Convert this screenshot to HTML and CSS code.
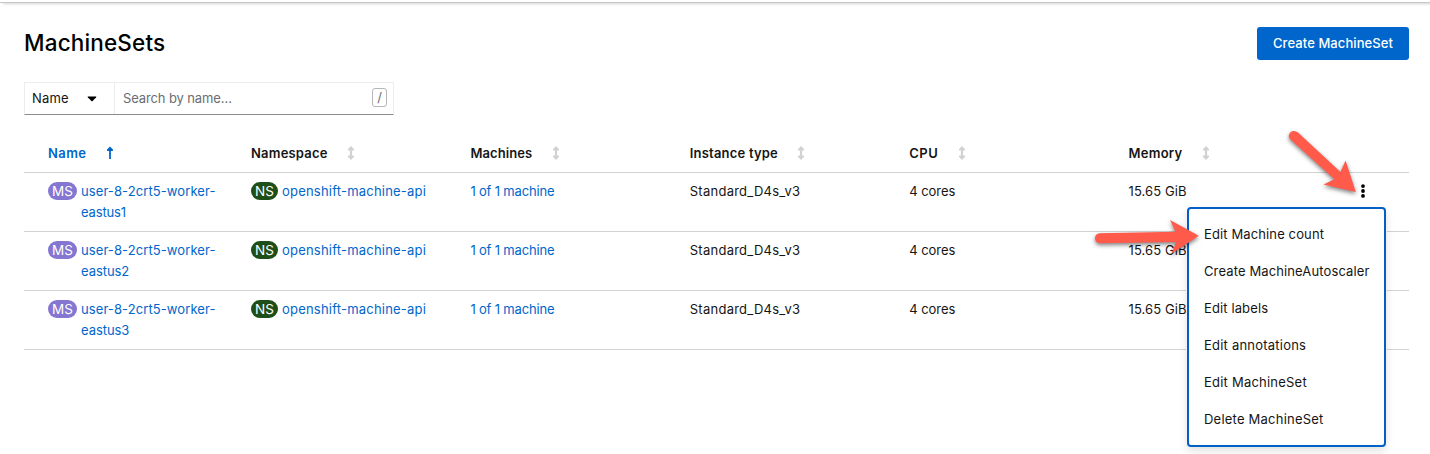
FILE: index.html
```
<!DOCTYPE html>
<html lang="en">
<head>
<meta charset="utf-8">
<title>MachineSets</title>
<link rel="stylesheet" href="styles.css">
</head>
<body>
<svg class="defs" width="0" height="0">
  <symbol id="sort" viewBox="0 0 8 14"><path d="M4 0 7.200 3.300 6.700 4.500H5.100V9.500H6.700L7.200 10.700 4 14 .8 10.700 1.300 9.500H2.900V4.500H1.300L.8 3.300Z"/></symbol>
  <symbol id="up" viewBox="0 0 8 14"><path d="M4 .4 7.200 3.700 6.700 4.900H4.900V13.100H3.100V4.900H1.300L.8 3.700Z"/></symbol>
</svg>
<div class="masthead-edge"></div>
<main class="page">
  <header class="title-row">
    <h1 class="title">MachineSets</h1>
    <button class="create">Create MachineSet</button>
  </header>
  <div class="filter">
    <div class="filter-select"><span>Name</span><svg width="10" height="6" viewBox="0 0 10 6"><path d="M1.2.5H8.8Q9.7.5 9.2 1.2L5.6 5Q5 5.6 4.4 5L.8 1.2Q.3.5 1.2.5Z"/></svg></div>
    <div class="filter-input"><span class="placeholder">Search by name…</span><span class="key">/</span></div>
  </div>
  <section class="table">
    <div class="row head">
      <div class="th sorted w-name">Name<svg class="sort"><use href="#up"/></svg></div>
      <div class="th w-namespace">Namespace<svg class="sort"><use href="#sort"/></svg></div>
      <div class="th w-machines">Machines<svg class="sort"><use href="#sort"/></svg></div>
      <div class="th w-instance">Instance type<svg class="sort"><use href="#sort"/></svg></div>
      <div class="th w-cpu">CPU<svg class="sort"><use href="#sort"/></svg></div>
      <div class="th w-memory">Memory<svg class="sort"><use href="#sort"/></svg></div>
    </div>
    <div class="row">
      <div class="resource"><span class="badge ms">MS</span><a class="link set">user-8-2crt5-worker-<br><span class="one">eastus1</span></a></div>
      <div class="resource"><span class="badge ns">NS</span><a class="link project">openshift-machine-api</a></div>
      <div><a class="link count">1 of 1 machine</a></div>
      <div class="instance">Standard_D4s_v3</div>
      <div class="cores">4 cores</div>
      <div>15.65 GiB</div>
      <div class="actions">
        <svg width="6" height="14" viewBox="0 0 6 14"><circle cx="3" cy="2.1" r="1.9"/><circle cx="3" cy="7" r="1.9"/><circle cx="3" cy="11.9" r="1.9"/></svg>
        <div class="menu">
          <a class="m-count">Edit Machine count</a>
          <a class="m-scaler">Create MachineAutoscaler</a>
          <a class="m-labels">Edit labels</a>
          <a class="m-notes">Edit annotations</a>
          <a class="m-edit">Edit MachineSet</a>
          <a class="m-delete">Delete MachineSet</a>
        </div>
      </div>
    </div>
    <div class="row">
      <div class="resource"><span class="badge ms">MS</span><a class="link set">user-8-2crt5-worker-<br><span class="other">eastus2</span></a></div>
      <div class="resource"><span class="badge ns">NS</span><a class="link project">openshift-machine-api</a></div>
      <div><a class="link count">1 of 1 machine</a></div>
      <div class="instance">Standard_D4s_v3</div>
      <div class="cores">4 cores</div>
      <div>15.65 GiB</div>
    </div>
    <div class="row">
      <div class="resource"><span class="badge ms">MS</span><a class="link set">user-8-2crt5-worker-<br><span class="other">eastus3</span></a></div>
      <div class="resource"><span class="badge ns">NS</span><a class="link project">openshift-machine-api</a></div>
      <div><a class="link count">1 of 1 machine</a></div>
      <div class="instance">Standard_D4s_v3</div>
      <div class="cores">4 cores</div>
      <div>15.65 GiB</div>
    </div>
  </section>
</main>
<svg class="arrows" width="1430" height="454" viewBox="0 0 1430 454">
  <path d="M1290.5 132.2Q1294 129.500 1298 132.600L1340.500 172 1345.600 160.500 1355.800 192 1323.500 184.600 1334.500 179.200 1290.500 139.500Q1287 136 1290.500 132.200Z"/>
  <path d="M1100 233.200 1175.500 231.800 1170 220 1198.800 235.800 1171.500 253.700 1176.200 242 1100 243.300Q1095 243 1095 238.300 1095 233.600 1100 233.200Z"/>
</svg>
</body>
</html>
```
FILE: styles.css
```
* { box-sizing: border-box; }
body { margin: 0; background: #fff; color: #151515; font: 13px/21px Inter, "Noto Sans", sans-serif; height: 454px; overflow: hidden; position: relative; }
.defs { position: absolute; }
.masthead-edge { height: 3px; border-bottom: 1px solid #c7c7c7; box-shadow: 3px 1px 3px rgba(0,0,0,.18); }
.page { padding: 24px 21px 0 24px; }
.title-row { display: flex; justify-content: space-between; height: 33px; }
.title { margin: 0; font-size: 22.5px; line-height: 32px; font-weight: 500; letter-spacing: .16px; color: #000; }
.create { width: 152px; height: 33px; padding: 0; border: 0; border-radius: 3px; background: #06c; color: #fff; font: 500 13px/33px Inter, sans-serif; letter-spacing: .08px; }
.filter { display: flex; width: 370px; height: 33px; margin-top: 22px; border: 1px solid #ededed; border-bottom-color: #8a8d90; }
.filter-select { display: flex; align-items: center; justify-content: space-between; width: 90px; padding: 0 17px 0 7px; border-right: 1px solid #ededed; letter-spacing: .2px; }
.filter-input { display: flex; align-items: center; justify-content: space-between; flex: 1; padding: 0 6px 0 8px; color: #6a6e73; }
.placeholder { letter-spacing: -.12px; }
.key { width: 15px; height: 19px; margin-top: -2px; border: 1px solid #b4b6b8; border-radius: 3px; line-height: 17px; text-align: center; }
.table { margin-top: 19px; width: 1385px; }
.row { display: grid; grid-template-columns: 203px 219.4px 219.4px 219.4px 219.4px 1fr 58px; height: 59px; padding: 8px 0 0 24px; border-bottom: 1px solid #d2d2d2; letter-spacing: .09px; white-space: nowrap; }
.head { height: 39px; }
.th { display: flex; align-items: center; font-weight: 600; height: 22px; }
.sort { width: 8px; height: 14px; margin-left: 20px; fill: #d2d2d2; }
.sorted { color: #06c; }
.sorted .sort { fill: #06c; }
.w-name { letter-spacing: .4px; }
.w-namespace { letter-spacing: .2px; }
.w-namespace .sort { margin-left: 19px; }
.w-machines { letter-spacing: .08px; }
.w-instance { letter-spacing: .2px; }
.w-instance .sort { margin-left: 18.5px; }
.w-cpu { letter-spacing: .5px; }
.w-memory { letter-spacing: .25px; }
.resource { display: flex; align-items: flex-start; }
.badge { height: 18px; margin: 1px 4px 0 0; border-radius: 9px; color: #fff; font-size: 13.5px; line-height: 18px; text-align: center; }
.ms { width: 29px; background: #8476d1; letter-spacing: 0; }
.ns { width: 27px; background: #1e4f18; letter-spacing: 0; }
.link { color: #06c; }
.one { letter-spacing: -.14px; }
.other { letter-spacing: -.05px; }
.project { letter-spacing: .21px; }
.count { letter-spacing: -.17px; }
.instance { letter-spacing: .25px; }
.cores { letter-spacing: -.05px; }
.actions { position: relative; padding: 3px 0 0 9px; }
.actions svg { display: block; }
.menu { position: absolute; z-index: 1; top: 26px; right: 23px; width: 199px; height: 240px; padding: 7px 15px; border: 2px solid #0060c8; border-radius: 4px; background: #fff; box-shadow: 0 4px 8px rgba(3,3,3,.12), 0 0 0 1px #fff; }
.menu a { display: block; line-height: 37px; }
.m-count, .m-scaler, .m-labels { letter-spacing: .12px; }
.m-notes, .m-edit, .m-delete { letter-spacing: .22px; }
.arrows { position: absolute; z-index: 2; left: 0; top: 0; fill: #ff5a4a; filter: drop-shadow(0 2px 2px rgba(0,0,0,.5)); }
```
